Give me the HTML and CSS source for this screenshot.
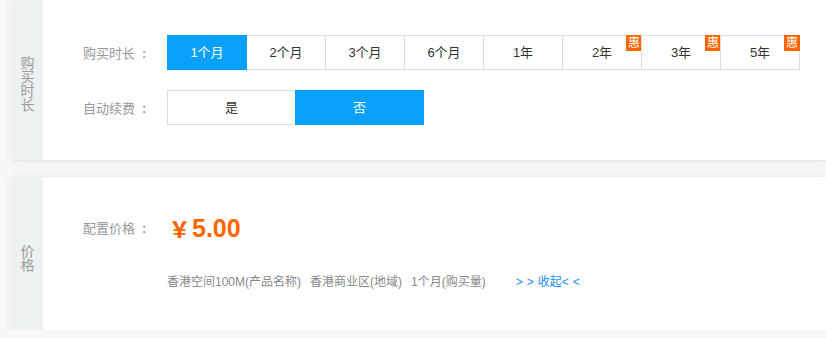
FILE: index.html
```html
<!DOCTYPE html>
<html>
<head>
<meta charset="utf-8">
<title>购买</title>
<link rel="stylesheet" href="styles.css">
</head>
<body>
<div class="panel panel-top">
	<div class="side"><span class="side-txt">购买时长</span></div>
	<div class="main">
		<div class="row">
			<span class="label">购买时长<i class="colon">:</i></span>
			<div class="opts">
				<a class="opt on">1个月</a>
				<a class="opt">2个月</a>
				<a class="opt">3个月</a>
				<a class="opt">6个月</a>
				<a class="opt">1年</a>
				<a class="opt">2年<i class="hui">惠</i></a>
				<a class="opt">3年<i class="hui">惠</i></a>
				<a class="opt">5年<i class="hui">惠</i></a>
			</div>
		</div>
		<div class="row row-renew">
			<span class="label">自动续费<i class="colon">:</i></span>
			<div class="opts">
				<a class="opt wide">是</a>
				<a class="opt wide on">否</a>
			</div>
		</div>
	</div>
</div>

<div class="panel panel-price">
	<div class="side"><span class="side-txt">价格</span></div>
	<div class="main">
		<div class="row">
			<span class="label">配置价格<i class="colon">:</i></span>
			<span class="price"><b class="yen">￥</b>5.00</span>
		</div>
		<div class="summary">
			<span>香港空间100M(产品名称)</span>
			<span>香港商业区(地域)</span>
			<span>1个月(购买量)</span>
			<a class="fold"><em>&gt;</em><em>&gt;</em>收起<em>&lt;</em><em>&lt;</em></a>
		</div>
	</div>
</div>
</body>
</html>
```

FILE: styles.css
```css
html {
	overflow: hidden;
}
body {
	margin: 0px;
	padding: 0 0 0 12px;
	background: #f8f8f8;
	font-family: "Liberation Sans", "Noto Sans CJK SC", sans-serif;
	font-size: 13px;
	color: #333;
}
.panel {
	display: flex;
	background: #fff;
	box-shadow: 0 0 10px rgba(0,0,0,.07);
}
.panel-top {
	height: 160px;
	border-bottom: 1px solid #e8e8e8;
}
.panel-price {
	margin-top: 16px;
	height: 153px;
}
.side {
	width: 31px;
	background: #eef1f2;
	display: flex;
	align-items: center;
	justify-content: center;
}
.side-txt {
	width: 14px;
	font-size: 14px;
	line-height: 14px;
	color: #9a9a9a;
	word-break: break-all;
	margin-top: 8px;
}
.main {
	flex: 1;
	padding: 35px 0 0 40px;
}
.row {
	display: flex;
	align-items: center;
	height: 35px;
}
.row-renew {
	margin-top: 20px;
}
.label {
	width: 84px;
	color: #999;
	font-size: 13px;
}
.colon {
	font-style: normal;
	font-weight: bold;
	margin-left: 7px;
}
.opts {
	display: flex;
	padding-left: 1px;
}
.opt {
	position: relative;
	width: 78px;
	height: 33px;
	line-height: 33px;
	margin-left: -1px;
	border: 1px solid #ddd;
	text-align: center;
	color: #333;
	font-size: 13px;
}
.opt.wide {
	width: 127px;
}
.opt.on {
	background: #07a0fb;
	border-color: #07a0fb;
	color: #fff;
	z-index: 1;
}
.hui {
	position: absolute;
	top: -1px;
	right: -1px;
	width: 16px;
	height: 16px;
	line-height: 16px;
	background: #ff6600;
	color: #fff;
	font-style: normal;
	font-size: 12px;
	text-align: center;
}
.panel-price .main {
	padding-top: 33px;
}
.price {
	margin-left: 2px;
	color: #ff6600;
	font-size: 25px;
	font-weight: bold;
}
.yen {
	font-size: 21px;
	margin-right: 2px;
}
.summary {
	display: flex;
	gap: 9px;
	margin: 27px 0 0 84px;
	height: 20px;
	line-height: 20px;
	font-size: 12px;
	color: #888;
}
.fold {
	margin-left: 21px;
	color: #1a8cf5;
}
.fold em {
	font-style: normal;
	display: inline-block;
	width: 11px;
	text-align: left;
}
```
